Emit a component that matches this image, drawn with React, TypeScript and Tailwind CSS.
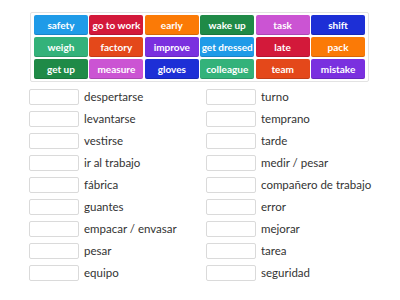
const tiles: { t: string; c: string }[] = [
  { t: "safety", c: "bg-[#1f9be8]" },
  { t: "go to work", c: "bg-[#d3193a]" },
  { t: "early", c: "bg-[#fb7a06]" },
  { t: "wake up", c: "bg-[#1f8a47]" },
  { t: "task", c: "bg-[#cb54d3]" },
  { t: "shift", c: "bg-[#1d2fd6]" },
  { t: "weigh", c: "bg-[#33b27a]" },
  { t: "factory", c: "bg-[#e4481a]" },
  { t: "improve", c: "bg-[#7a30df]" },
  { t: "get dressed", c: "bg-[#1f9be8]" },
  { t: "late", c: "bg-[#d3193a]" },
  { t: "pack", c: "bg-[#fb7a06]" },
  { t: "get up", c: "bg-[#1f8a47]" },
  { t: "measure", c: "bg-[#cb54d3]" },
  { t: "gloves", c: "bg-[#1d2fd6]" },
  { t: "colleague", c: "bg-[#33b27a]" },
  { t: "team", c: "bg-[#e4481a]" },
  { t: "mistake", c: "bg-[#7a30df]" },
];

const left = [
  "despertarse",
  "levantarse",
  "vestirse",
  "ir al trabajo",
  "fábrica",
  "guantes",
  "empacar / envasar",
  "pesar",
  "equipo",
];

const right = [
  "turno",
  "temprano",
  "tarde",
  "medir / pesar",
  "compañero de trabajo",
  "error",
  "mejorar",
  "tarea",
  "seguridad",
];

function Column({ items }: { items: string[] }) {
  return (
    <div className="flex flex-col gap-[6px] w-[177px]">
      {items.map((s) => (
        <div key={s} className="flex items-center h-[16px]">
          <div className="w-[50px] h-[16px] bg-white border border-[#dadada] rounded-[2px] shrink-0" />
          <span className="ml-[5px] text-[11.5px] text-[#333] whitespace-nowrap leading-none">{s}</span>
        </div>
      ))}
    </div>
  );
}

export default function App() {
  return (
    <div className="w-[400px] h-[300px] bg-white overflow-hidden font-['Lato',sans-serif]">
      <div className="pt-[12px] pl-[30px]">
        <div className="w-[339px] border border-[#e3e3e3] rounded-[2px] px-[3px] pt-[2px] pb-[2px] grid grid-cols-6 gap-x-[1.5px] gap-y-[2px] bg-white">
          {tiles.map((x) => (
            <div
              key={x.t}
              className={`${x.c} h-[20px] rounded-[2px] flex items-center justify-center text-white font-bold text-[10px] whitespace-nowrap leading-none shadow-[inset_0_-1px_0_rgba(0,0,0,0.15)]`}
            >
              {x.t}
            </div>
          ))}
        </div>
      </div>
      <div className="flex pl-[29px] pt-[7px]">
        <Column items={left} />
        <Column items={right} />
      </div>
    </div>
  );
}
